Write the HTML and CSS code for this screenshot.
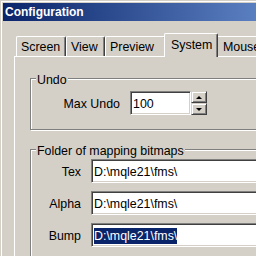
FILE: index.html
```html
<!DOCTYPE html>
<html>
<head>
<meta charset="utf-8">
<link rel="stylesheet" href="styles.css">
</head>
<body>
<div class="window">
  <div class="titlebar"><span class="title">Configuration</span></div>
  <div class="body">
    <div class="tabs">
      <div class="tab tab-screen">Screen</div>
      <div class="tab tab-view">View</div>
      <div class="tab tab-preview">Preview</div>
      <div class="tab tab-system selected">System</div>
      <div class="tab tab-mouse">Mouse</div>
    </div>
    <div class="panel">
      <div class="group group-undo">
        <div class="legend">Undo</div>
        <div class="row row-undo">
          <span class="lbl lbl-wide">Max Undo</span>
          <div class="edit edit-num"><span class="val">100</span></div>
          <div class="spin">
            <div class="spin-btn"><span class="tri tri-up"></span></div>
            <div class="spin-btn"><span class="tri tri-down"></span></div>
          </div>
        </div>
      </div>
      <div class="group group-folder">
        <div class="legend">Folder of mapping bitmaps</div>
        <div class="rows">
          <div class="row">
            <span class="lbl">Tex</span>
            <div class="edit edit-path"><span class="val">D:\mqle21\fms\</span></div>
          </div>
          <div class="row">
            <span class="lbl">Alpha</span>
            <div class="edit edit-path"><span class="val">D:\mqle21\fms\</span></div>
          </div>
          <div class="row">
            <span class="lbl">Bump</span>
            <div class="edit edit-path"><span class="val sel">D:\mqle21\fms\</span></div>
          </div>
        </div>
      </div>
    </div>
  </div>
</div>
</body>
</html>
```

FILE: styles.css
```css
html, body {
  margin: 0;
  padding: 0;
}
body {
  width: 256px;
  height: 256px;
  overflow: hidden;
  background: #d4d0c8;
  font-family: "Liberation Sans", Arial, sans-serif;
  font-size: 12.4px;
  color: #000;
}
.window {
  width: 256px;
  height: 256px;
  overflow: hidden;
  box-sizing: border-box;
  padding: 3px 0 0 3px;
  background: #d4d0c8;
  box-shadow: inset 1px 1px 0 #d4d0c8, inset 2px 2px 0 #ffffff;
}
.titlebar {
  height: 18px;
  background: linear-gradient(to right, #0a246a 0%, #5a7fc0 100%);
  display: flex;
  align-items: center;
}
.title {
  color: #fff;
  font-weight: bold;
  font-size: 12px;
  line-height: 18px;
  padding-left: 2px;
}
.body {
  padding-left: 11px;
}
.tabs {
  display: flex;
  align-items: flex-end;
  margin-top: 12px;
  padding-left: 2px;
  height: 23px;
  position: relative;
  z-index: 1;
}
.tab {
  box-sizing: border-box;
  flex: none;
  height: 20px;
  border-top: 1px solid #fff;
  border-left: 1px solid #fff;
  border-right: 1px solid #404040;
  box-shadow: inset -1px 0 0 #808080;
  border-radius: 2px 2px 0 0;
  background: #d4d0c8;
  padding: 3px 0 0 4px;
  line-height: 14px;
  white-space: nowrap;
}
.tab-screen { width: 50px; }
.tab-view { width: 39px; }
.tab-preview { width: 61px; }
.tab-system { width: 54px; }
.tab-mouse { width: 60px; padding-left: 6px; }
.tab.selected {
  height: 24px;
  margin: 0 -2px -1px -2px;
  padding: 4px 0 0 6px;
  position: relative;
  z-index: 2;
}
.panel {
  border-top: 1px solid #fff;
  border-left: 1px solid #fff;
  padding: 0 0 0 15px;
  height: 260px;
}
.group {
  border: 1px solid #808080;
  box-shadow: inset 1px 1px 0 #fff, 1px 1px 0 #fff;
  box-sizing: border-box;
  width: 300px;
  display: flex;
  flex-direction: column;
  align-items: flex-start;
}
.group-undo {
  margin-top: 21px;
  height: 52px;
}
.group-folder {
  margin-top: 19px;
  height: 140px;
}
.legend {
  margin: -6px 0 0 5px;
  padding: 0 1px;
  background: #d4d0c8;
  line-height: 14px;
  white-space: nowrap;
}
.row {
  display: flex;
  align-items: center;
}
.row-undo {
  margin-top: 4px;
}
.rows {
  margin-top: 1px;
  display: flex;
  flex-direction: column;
  gap: 8px;
}
.lbl {
  width: 50px;
  text-align: right;
  margin-right: 10px;
  white-space: nowrap;
  padding-top: 2px;
}
.lbl-wide {
  width: 89px;
}
.edit {
  box-sizing: border-box;
  height: 24px;
  background: #fff;
  border-top: 1px solid #808080;
  border-left: 1px solid #808080;
  border-bottom: 1px solid #fff;
  border-right: 1px solid #fff;
  box-shadow: inset 1px 1px 0 #404040, inset -1px -1px 0 #d4d0c8;
  display: flex;
  align-items: center;
  padding: 1px 0 0 2px;
  white-space: nowrap;
}
.edit-num {
  width: 61px;
}
.edit-path {
  width: 200px;
}
.val {
  line-height: 16px;
}
.val.sel {
  background: #0a246a;
  color: #fff;
}
.spin {
  display: flex;
  flex-direction: column;
  height: 24px;
}
.spin-btn {
  box-sizing: border-box;
  width: 16px;
  height: 12px;
  background: #d4d0c8;
  border-top: 1px solid #d4d0c8;
  border-left: 1px solid #d4d0c8;
  border-right: 1px solid #404040;
  border-bottom: 1px solid #404040;
  box-shadow: inset 1px 1px 0 #fff, inset -1px -1px 0 #808080;
  display: flex;
  align-items: center;
  justify-content: center;
}
.tri {
  width: 0;
  height: 0;
  border-left: 3px solid transparent;
  border-right: 3px solid transparent;
}
.tri-up {
  border-bottom: 3px solid #000;
}
.tri-down {
  border-top: 3px solid #000;
}
```
